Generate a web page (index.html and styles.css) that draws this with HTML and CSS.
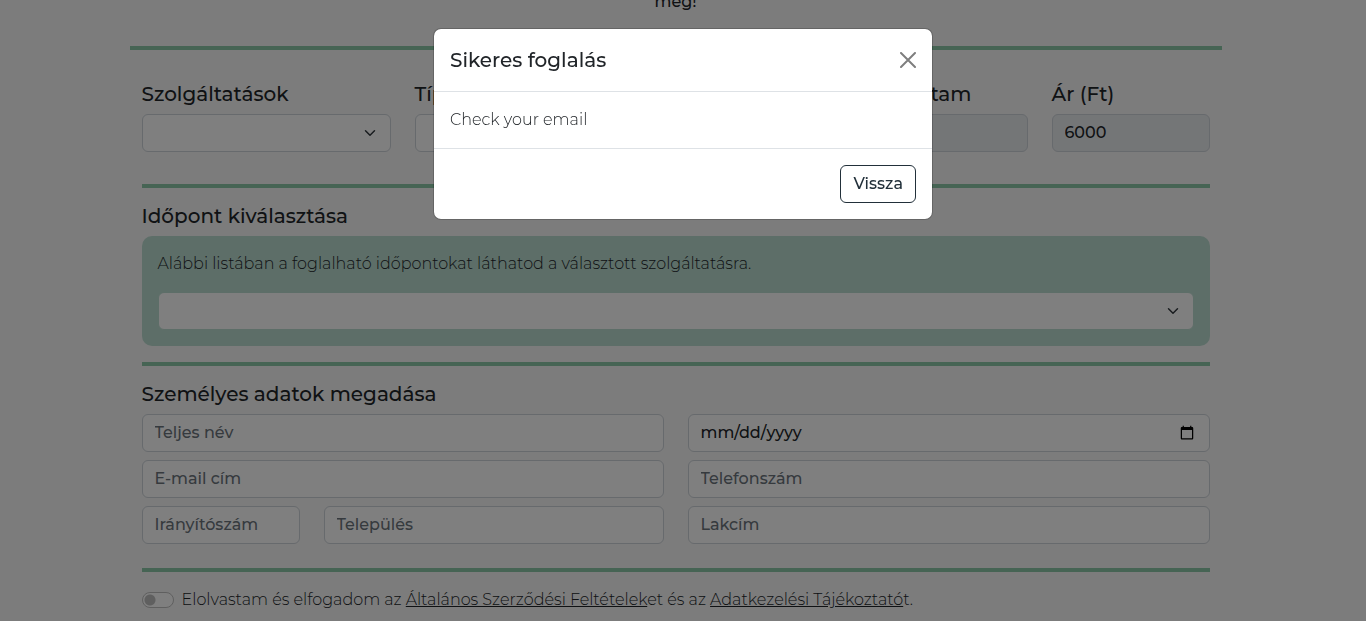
FILE: index.html
```
<!DOCTYPE html>
<html lang="hu">
<head>
<meta charset="utf-8">
<meta name="viewport" content="width=device-width, initial-scale=1">
<title>Foglalás</title>
<link rel="stylesheet" href="styles.css">
</head>
<body>
<main class="container">
  <div class="intro"><p>meg!</p></div>
  <hr class="rule">
  <form class="booking">
    <div class="grid services">
      <div class="span-3">
        <label class="heading" for="service">Szolgáltatások</label>
        <select class="field select" id="service"></select>
      </div>
      <div class="span-5">
        <label class="heading" for="type">Típus</label>
        <select class="field select" id="type"></select>
      </div>
      <div class="span-2">
        <label class="heading" for="duration">Időtartam</label>
        <input class="field" id="duration" type="text" disabled>
      </div>
      <div class="span-2">
        <label class="heading" for="price">Ár (Ft)</label>
        <input class="field" id="price" type="text" value="6000" disabled>
      </div>
    </div>
    <hr class="rule">
    <h5 class="heading">Időpont kiválasztása</h5>
    <div class="slot-panel">
      <label class="slot-text" for="slot">Alábbi listában a foglalható időpontokat láthatod a választott szolgáltatásra.</label>
      <select class="field select" id="slot"></select>
    </div>
    <hr class="rule">
    <h5 class="heading">Személyes adatok megadása</h5>
    <div class="grid personal">
      <div class="span-6"><input class="field" type="text" placeholder="Teljes név" aria-label="Teljes név"></div>
      <div class="span-6"><input class="field date" type="date" aria-label="Születési dátum"></div>
      <div class="span-6"><input class="field" type="email" placeholder="E-mail cím" aria-label="E-mail cím"></div>
      <div class="span-6"><input class="field" type="tel" placeholder="Telefonszám" aria-label="Telefonszám"></div>
      <div class="span-2"><input class="field" type="text" placeholder="Irányítószám" aria-label="Irányítószám"></div>
      <div class="span-4"><input class="field" type="text" placeholder="Település" aria-label="Település"></div>
      <div class="span-6"><input class="field" type="text" placeholder="Lakcím" aria-label="Lakcím"></div>
    </div>
    <hr class="rule">
    <div class="consent">
      <input class="switch" id="terms" type="checkbox">
      <label for="terms">Elolvastam és elfogadom az <a href="#aszf">Általános Szerződési Feltételek</a>et és az <a href="#adatkezeles">Adatkezelési Tájékoztató</a>t.</label>
    </div>
  </form>
</main>
<div class="backdrop">
  <div class="modal" role="dialog" aria-modal="true" aria-labelledby="modal-title">
    <div class="modal-header">
      <h5 class="modal-title" id="modal-title">Sikeres foglalás</h5>
      <button class="close" type="button" aria-label="Bezárás">
        <svg viewBox="0 0 16 16" width="16" height="16" aria-hidden="true"><path d="M1 1 15 15M15 1 1 15" fill="none" stroke="#000" stroke-width="2" stroke-linecap="round"/></svg>
      </button>
    </div>
    <div class="modal-body"><p>Check your email</p></div>
    <div class="modal-footer"><button class="btn" type="button">Vissza</button></div>
  </div>
</div>
</body>
</html>
```
FILE: styles.css
```
*, *::before, *::after { box-sizing: border-box; }

html { overflow: hidden; }

body {
  margin: 0;
  padding-right: 15px;
  background: #f8f8f8;
  color: #212529;
  font-family: Montserrat, Inter, "Noto Sans", sans-serif;
  font-size: 16px;
  font-weight: 300;
  line-height: 24px;
}

p, h5 { margin: 0; }

.container {
  max-width: 1140px;
  margin: 0 auto;
  padding: 0 24px;
}

.intro {
  display: flex;
  align-items: flex-end;
  justify-content: center;
  height: 14px;
  overflow: hidden;
  margin-bottom: 32px;
  font-weight: 500;
}

.rule {
  height: 4px;
  margin: 16px 0;
  border: 0;
  background: #8cc8a8;
}

.booking { padding: 0 12px; }

.grid {
  display: grid;
  grid-template-columns: repeat(12, minmax(0, 1fr));
  column-gap: 24px;
  row-gap: 8px;
}

.services { padding: 16px 0; }
.personal { padding-bottom: 8px; }
.span-2 { grid-column: span 2; }
.span-3 { grid-column: span 3; }
.span-4 { grid-column: span 4; }
.span-5 { grid-column: span 5; }
.span-6 { grid-column: span 6; }

.heading {
  display: block;
  margin-bottom: 8px;
  font-size: 20px;
  font-weight: 500;
  line-height: 24px;
}

.field {
  display: block;
  width: 100%;
  height: 38px;
  padding: 5px 12px 7px;
  border: 1px solid #ced4da;
  border-radius: 6px;
  background: #fff;
  color: #212529;
  font: inherit;
  font-weight: 500;
}

.field::placeholder { color: #6c757d; opacity: 1; }
.field:disabled { background: #e9ecef; opacity: 1; }

.date { padding: 6px 12px; }
.date::-webkit-datetime-edit-month-field,
.date::-webkit-datetime-edit-day-field,
.date::-webkit-datetime-edit-year-field { padding: 0; }

.select {
  appearance: none;
  background: #fff url("data:image/svg+xml,%3Csvg xmlns='http://www.w3.org/2000/svg' viewBox='0 0 16 16'%3E%3Cpath fill='none' stroke='%23343a40' stroke-linecap='round' stroke-linejoin='round' stroke-width='2' d='m2 5 6 6 6-6'/%3E%3C/svg%3E") no-repeat right 12px center / 16px 12px;
}

.slot-panel {
  padding: 16px;
  border-radius: 10px;
  background: #badcd0;
}

.slot-text {
  display: block;
  margin-bottom: 16px;
}

.slot-panel .field { border-color: #badcd0; }

.consent {
  display: flex;
  align-items: center;
  gap: 8px;
}

.consent a { color: #212529; }

.switch {
  appearance: none;
  flex: none;
  width: 32px;
  height: 16px;
  margin: 0;
  border: 1px solid #bfbfbf;
  border-radius: 8px;
  background: #fff radial-gradient(circle at 7px 7px, #bfbfbf 5px, transparent 6px);
}

.backdrop {
  position: fixed;
  inset: 0;
  padding: 28px 16px;
  background: rgba(0, 0, 0, 0.5);
}

.modal {
  max-width: 500px;
  margin: 0 auto;
  border: 1px solid rgba(0, 0, 0, 0.18);
  border-radius: 8px;
  background: #fff;
  background-clip: padding-box;
}

.modal-header {
  display: flex;
  align-items: center;
  justify-content: space-between;
  padding: 16px;
  border-bottom: 1px solid #dee2e6;
}

.modal-title {
  font-size: 20px;
  font-weight: 500;
  line-height: 30px;
}

.close {
  display: flex;
  padding: 0;
  border: 0;
  background: transparent;
  opacity: 0.5;
}

.modal-body { padding: 16px; }

.modal-footer {
  display: flex;
  justify-content: flex-end;
  padding: 16px;
  border-top: 1px solid #dee2e6;
}

.btn {
  padding: 6px 12px;
  border: 1px solid #22303a;
  border-radius: 6px;
  background: #fff;
  color: #22303a;
  font: inherit;
  font-weight: 500;
}
```
